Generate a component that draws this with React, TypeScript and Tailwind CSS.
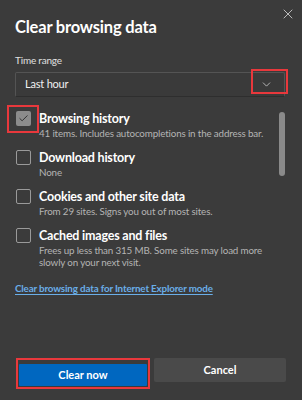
import { X, ChevronDown, Check } from 'lucide-react';

const items = [
    { title: 'Browsing history', sub: '41 items. Includes autocompletions in the address bar.', checked: true },
    { title: 'Download history', sub: 'None', checked: false },
    { title: 'Cookies and other site data', sub: 'From 29 sites. Signs you out of most sites.', checked: false },
    { title: 'Cached images and files', sub: 'Frees up less than 315 MB. Some sites may load more slowly on your next visit.', checked: false },
];

export default function App() {
    return (
        <div
            className="relative w-[302px] h-[400px] bg-[#3b3b3b] text-white overflow-hidden"
            style={{ fontFamily: 'Lato, "Noto Sans", sans-serif' }}
        >
            {/* close */}
            <button className="absolute left-[280px] top-[6px] text-[#d0d0d0]">
                <X size={16} strokeWidth={1.3} />
            </button>

            <div className="px-[15px] pt-[15px]">
                <h1 className="text-[16.5px] leading-[24px] font-bold tracking-[-0.2px]">Clear browsing data</h1>

                <p className="mt-[14px] text-[10px] leading-[14px] tracking-[-0.2px] text-[#e0e0e0]">Time range</p>

                <div className="relative mt-[5px] mr-[2px] h-[25px] flex items-center justify-between border border-[#545454] border-b-[#2e2e2e] rounded-[2px] bg-[#3a3a3a] pl-[9px] pr-[11px]">
                    <span className="text-[11px] tracking-[-0.2px] text-[#f0f0f0]">Last hour</span>
                    <ChevronDown size={13} strokeWidth={1.4} className="text-[#d8d8d8]" />
                    <div className="absolute right-[-4px] top-[-4px] w-[37px] h-[25px] border-2 border-[#e8383c]" />
                </div>

                <div className="relative mt-[14px] pr-[18px]">
                    <div className="flex flex-col gap-[11px]">
                        {items.map((it, i) => (
                            <div key={i} className="relative flex gap-[8px]">
                                <div
                                    className={`w-[15px] h-[15px] shrink-0 ml-[1px] rounded-[2px] flex items-center justify-center ${
                                        it.checked ? 'bg-[#8c8c8c]' : 'border border-[#9a9a9a]'
                                    }`}
                                >
                                    {it.checked && <Check size={11} strokeWidth={2} className="text-[#2a2a2a]" />}
                                </div>
                                {it.checked && (
                                    <div className="absolute left-[-8px] top-[-6px] w-[32px] h-[28px] border-2 border-[#e8383c]" />
                                )}
                                <div>
                                    <p className="text-[12.5px] leading-[16px] font-bold tracking-[-0.2px] text-white">{it.title}</p>
                                    <p className="text-[9.8px] leading-[12px] tracking-[-0.15px] text-[#b4b4b4]">{it.sub}</p>
                                </div>
                            </div>
                        ))}
                    </div>
                    <div className="absolute right-[2px] top-[1px] w-[6px] h-[64px] rounded-full bg-[#8a8a8a]" />
                </div>

                <a className="block mt-[13px] text-[9.8px] leading-[14px] tracking-[-0.15px] text-[#6aaee8] underline underline-offset-2 font-bold">
                    Clear browsing data for Internet Explorer mode
                </a>
            </div>

            <div className="absolute left-[19px] top-[358px] flex items-start gap-[7px]">
                <div className="relative mt-[3px]">
                    <button className="w-[128px] h-[22px] bg-[#0067c0] text-[11px] font-bold text-white rounded-[1px]">
                        Clear now
                    </button>
                    <div className="absolute left-[-3px] top-[-3px] right-[-3px] bottom-[-3px] border-2 border-[#e8383c]" />
                </div>
                <button className="w-[132px] h-[24px] bg-[#4a4a4a] text-[11px] font-bold text-white rounded-[2px]">
                    Cancel
                </button>
            </div>
        </div>
    );
}
